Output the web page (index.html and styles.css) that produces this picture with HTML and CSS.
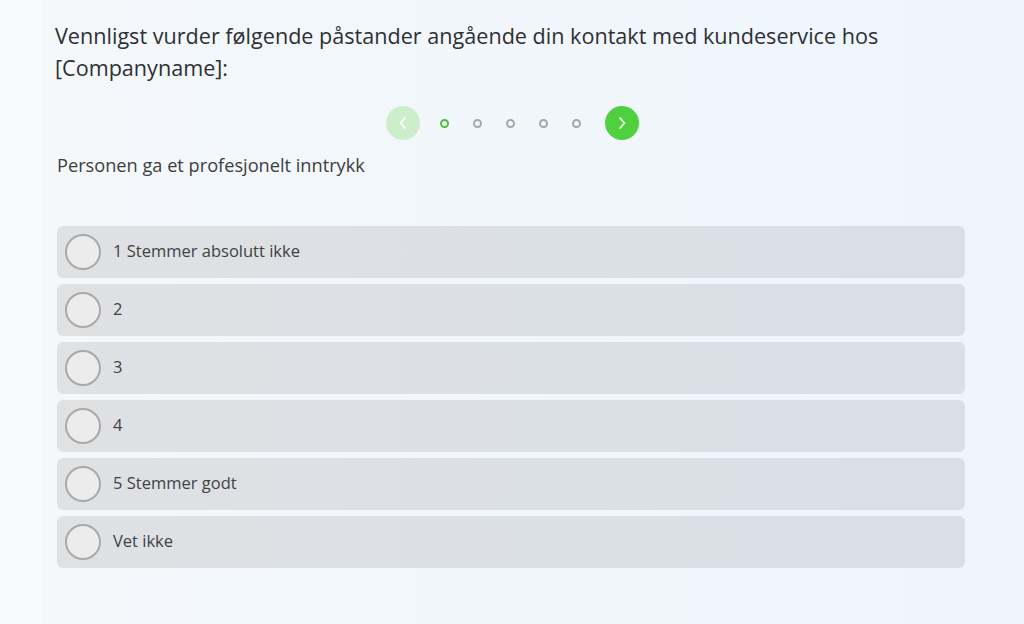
FILE: index.html
```html
<!DOCTYPE html>
<html>
<head>
    <title>Kundeservice</title>
    <link rel="stylesheet" href="styles.css">
</head>
<body>
    <div class="page">
        <div class="survey">
            <h1 class="question">Vennligst vurder følgende påstander angående din kontakt med kundeservice hos [Companyname]:</h1>

            <div class="pager">
                <button class="nav prev" aria-label="Forrige">
                    <svg width="12" height="14" viewBox="0 0 12 14"><path d="M8 2 L3.5 7 L8 12" fill="none" stroke="#fff" stroke-width="1.8" stroke-linecap="round" stroke-linejoin="round"/></svg>
                </button>
                <span class="dot active"></span>
                <span class="dot"></span>
                <span class="dot"></span>
                <span class="dot"></span>
                <span class="dot"></span>
                <button class="nav next" aria-label="Neste">
                    <svg width="12" height="14" viewBox="0 0 12 14"><path d="M4 2 L8.5 7 L4 12" fill="none" stroke="#eefbe9" stroke-width="1.8" stroke-linecap="round" stroke-linejoin="round"/></svg>
                </button>
            </div>

            <p class="statement">Personen ga et profesjonelt inntrykk</p>

            <div class="options">
                <label class="option"><span class="radio"></span><span>1 Stemmer absolutt ikke</span></label>
                <label class="option"><span class="radio"></span><span>2</span></label>
                <label class="option"><span class="radio"></span><span>3</span></label>
                <label class="option"><span class="radio"></span><span>4</span></label>
                <label class="option"><span class="radio"></span><span>5 Stemmer godt</span></label>
                <label class="option"><span class="radio"></span><span>Vet ikke</span></label>
            </div>
        </div>
    </div>
</body>
</html>
```

FILE: styles.css
```css
html, body {
    margin: 0;
    height: 100%;
}
body {
    font-family: "Open Sans", "Noto Sans", sans-serif;
    background: #f6fafd;
    color: #333;
}
.page {
    margin-left: 42px;
    min-height: 100%;
    background: linear-gradient(90deg, #f4f8fb 0%, #eef5fd 100%);
}
.survey {
    width: 908px;
    padding: 20px 0 0 15px;
}
.question {
    margin: 0 0 0 -2px;
    font-size: 21.6px;
    font-weight: 400;
    line-height: 32px;
    color: #2e3033;
    width: 900px;
}
.pager {
    display: flex;
    align-items: center;
    justify-content: center;
    gap: 24px;
    margin-top: 22px;
    padding-left: 3px;
}
.nav {
    width: 34px;
    height: 34px;
    border-radius: 50%;
    border: none;
    padding: 0;
    display: flex;
    align-items: center;
    justify-content: center;
    background: #4fd03e;
}
.nav.prev {
    background: #cdeecb;
    margin-right: -4px;
}
.nav.next {
    margin-left: 0;
}
.dot {
    width: 9px;
    height: 9px;
    box-sizing: border-box;
    border: 2px solid #a5a8ab;
    border-radius: 50%;
}
.dot.active {
    border-color: #4cc03a;
}
.statement {
    margin: 13px 0 0;
    font-size: 18.2px;
    color: #3c3e40;
}
.options {
    margin-top: 49px;
    display: flex;
    flex-direction: column;
    gap: 6px;
}
.option {
    height: 52px;
    display: flex;
    align-items: center;
    gap: 12px;
    padding-left: 8px;
    border-radius: 6px;
    background: linear-gradient(90deg, #dfe1e3 0%, #d8dfe7 100%);
    font-size: 16.5px;
    color: #3f4144;
}
.option span:last-child {
    margin-bottom: 3px;
}
.radio {
    width: 36px;
    height: 36px;
    box-sizing: border-box;
    border: 2px solid #a9a9a9;
    border-radius: 50%;
    background: #ececec;
}
```
